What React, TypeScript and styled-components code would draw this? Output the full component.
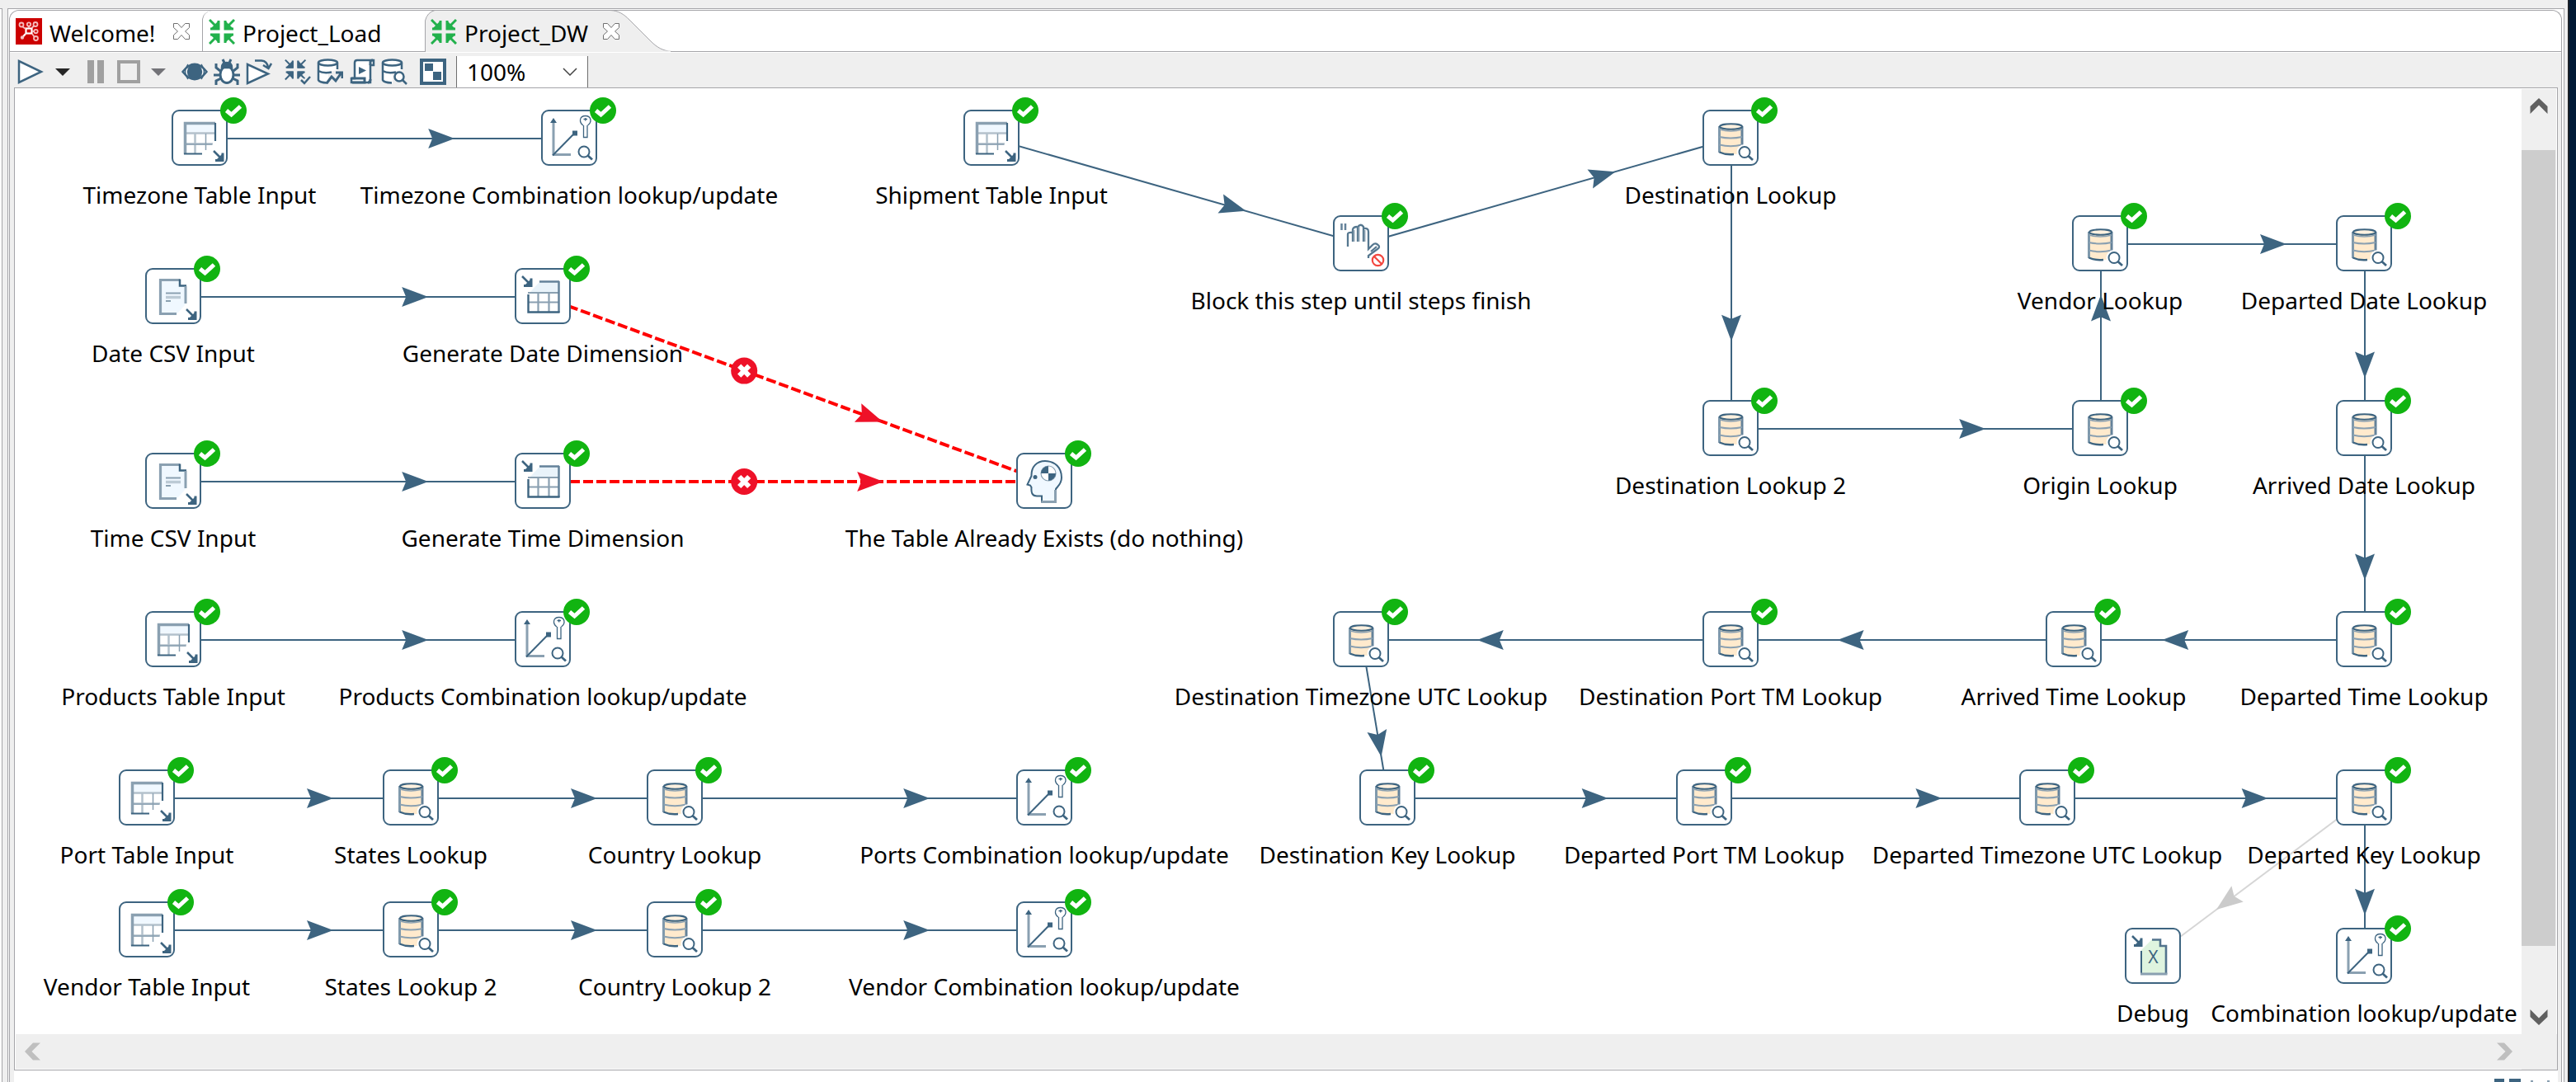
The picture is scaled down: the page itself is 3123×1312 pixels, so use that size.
import React from "react";
import styled, { createGlobalStyle } from "styled-components";

const INK = "#3d6480";
const SOFT = "#8aa0b1";
const LINE = "#a5a5a9";
const PANEL = "#efefef";

const GlobalStyle = createGlobalStyle`
  * { box-sizing: border-box; }
  body {
    margin: 0;
    background: ${PANEL};
    color: #000;
    font-family: "Noto Sans", "Open Sans", sans-serif;
    font-size: 28px;
    line-height: 36px;
  }
  button, select { font: inherit; color: inherit; }
`;

/* ---------- window frame ---------- */

const Desktop = styled.div`
  display: grid;
  grid-template-columns: 3px 1fr 10px;
  min-height: 100vh;
  background: ${PANEL};
`;

const Neighbour = styled.aside`
  margin-top: 10px;
  background: #fff;
  border-top: 1px solid ${LINE};
  border-right: 1px solid ${LINE};
`;

const Wallpaper = styled.div`
  border-left: 2px solid #1d2229;
  background: linear-gradient(#001833, #002c57 85%, #00335f);
`;

const Frame = styled.main`
  display: flex;
  margin: 10px 4px 0 6px;
  padding: 1px 2px 0 1px;
  border: 1px solid ${LINE};
  border-bottom: 0;
  background: #fff;
`;

const Editor = styled.div`
  flex: 1;
  min-width: 0;
  display: flex;
  flex-direction: column;
  border: 1px solid ${LINE};
  border-bottom: 0;
  border-radius: 12px 12px 0 0;
  background: ${PANEL};
`;

/* ---------- tabs ---------- */

const TabBar = styled.nav`
  display: flex;
  height: 50px;
  background: #fff;
  border-bottom: 1px solid ${LINE};
  border-radius: 12px 12px 0 0;
`;

const Tab = styled.div<{ $width: number; $first?: boolean; $active?: boolean }>`
  position: relative;
  display: flex;
  align-items: center;
  width: ${(p) => p.$width}px;
  height: ${(p) => (p.$active ? 50 : 49)}px;
  padding: 0 0 0 7px;
  border-left: ${(p) => (p.$first || p.$active ? 0 : 1)}px solid ${LINE};
  border-top-left-radius: 12px;
`;

const TabShape = styled.svg`
  position: absolute;
  inset: 0;
`;

const TabTitle = styled.button`
  position: relative;
  display: flex;
  align-items: center;
  gap: 9px;
  padding: 0;
  border: 0;
  background: none;
  white-space: nowrap;
`;

const TabText = styled.span`
  padding-top: 4px;
`;

const CloseButton = styled.button`
  position: relative;
  display: flex;
  margin-left: auto;
  margin-right: var(--close-gap, 15px);
  padding: 0;
  border: 0;
  background: none;
`;

/* ---------- toolbar ---------- */

const ToolBar = styled.div`
  display: flex;
  align-items: center;
  height: 43px;
  padding: 4px 0 0 9px;
  border-top: 1px solid #fff;
`;

const ToolGroup = styled.div<{ $gap?: number }>`
  display: flex;
  align-items: center;
  gap: ${(p) => p.$gap ?? 7}px;
  margin-right: 15px;
`;

const Tool = styled.button<{ $width?: number }>`
  display: flex;
  justify-content: center;
  width: ${(p) => p.$width ?? 32}px;
  padding: 0;
  border: 0;
  background: none;
`;

const ZoomBox = styled.label`
  display: flex;
  align-items: center;
  width: 160px;
  height: 38px;
  margin-left: -3px;
  padding-right: 12px;
  border: solid #6f6f6f;
  border-width: 0 1px;
  background: #fff;
`;

const ZoomSelect = styled.select`
  flex: 1;
  min-width: 0;
  height: 38px;
  padding: 0 0 0 12px;
  border: 0;
  background: none;
  appearance: none;
`;

/* ---------- canvas ---------- */

const Workspace = styled.div`
  flex: 1;
  display: flex;
  flex-direction: column;
  padding: 0 4px 0 5px;
`;

const Scroller = styled.section`
  flex: 1;
  display: grid;
  grid-template-columns: 1fr 43px;
  grid-template-rows: 1fr 43px;
  border: 1px solid ${LINE};
  background: ${PANEL};
`;

const Canvas = styled.div`
  position: relative;
  min-width: 0;
  overflow: hidden;
  background: #fff;
`;

const Hops = styled.svg`
  position: absolute;
  inset: 0;
  width: 100%;
  height: 100%;
`;

const StepBox = styled.figure`
  position: absolute;
  display: flex;
  flex-direction: column;
  align-items: center;
  width: 68px;
  margin: 0;
`;

const StepIcon = styled.div`
  width: 68px;
  height: 68px;
  border: 2px solid ${INK};
  border-radius: 9px;
  background: #fff;
  svg { display: block; margin: -2px; }
`;

const StepLabel = styled.figcaption`
  margin-top: 17px;
  white-space: nowrap;
`;

const Badge = styled.svg`
  position: absolute;
  top: -15px;
  right: -23px;
`;

const VerticalBar = styled.div`
  display: flex;
  flex-direction: column;
  border: solid #fff;
  border-width: 1px 1px 0 0;
`;

const HorizontalBar = styled.div`
  display: flex;
  justify-content: space-between;
  border: solid #fff;
  border-width: 0 0 1px 1px;
`;

const Arrow = styled.button`
  display: grid;
  place-items: center;
  width: 42px;
  height: 42px;
  padding: 0;
  border: 0;
  background: none;
`;

const Track = styled.div`
  flex: 1;
  display: grid;
  grid-template-rows: 32fr 965fr 65fr;
`;

const Thumb = styled.div`
  grid-row: 2;
  margin-right: 1px;
  background: #cdcdcd;
`;

const BottomStrip = styled.footer`
  display: flex;
  justify-content: flex-end;
  align-items: flex-end;
  height: 14px;
  padding-right: 8px;
  background: #fff;
`;

/* ---------- step drawings ---------- */

const SmallArrow = ({ x, y }: { x: number; y: number }) => (
  <g transform={`translate(${x} ${y})`}>
    <path d="M1 1 L9 9" stroke={INK} strokeWidth="2.5" />
    <path d="M12 3.5V12.500H3" fill="none" stroke={INK} strokeWidth="3" />
    <path d="M11 5v6H5z" fill={INK} />
  </g>
);

const Lens = ({ x, y }: { x: number; y: number }) => (
  <g transform={`translate(${x} ${y})`} fill="#fff" stroke={INK}>
    <circle r="6.500" strokeWidth="2" />
    <path d="M4.500 4.500L10 9.500" strokeWidth="2.800" />
  </g>
);

type Kind = "table" | "file" | "combo" | "generate" | "head" | "hand" | "db" | "excel";

const drawings: Record<Kind, React.ReactNode> = {
  table: (
    <>
      <path d="M18 18H52V27H18z" fill="#f0f8ff" />
      <path d="M28.500 28V53M17 28.500H53M17 41.500H50" stroke="#b3c1cc" strokeWidth="2.500" />
      <path d="M41.500 29V49M18 42H49" stroke={SOFT} strokeWidth="1.500" />
      <path d="M16.500 54V16.500H53" fill="none" stroke={SOFT} strokeWidth="3.500" />
      <path d="M53 16V38M15 53.500H37" stroke={INK} strokeWidth="2.200" />
      <SmallArrow x={50} y={49} />
    </>
  ),
  file: (
    <>
      <path d="M19 15H41V22H49V44L39 55H19z" fill="#f0f8ff" />
      <path d="M38 55.500H18.500V14.500H42" fill="none" stroke={SOFT} strokeWidth="3.200" />
      <path d="M42 13.500V21.500H50" fill="none" stroke={INK} strokeWidth="2.500" />
      <path d="M49 22V43" stroke={SOFT} strokeWidth="3" />
      <path d="M25 30.500H43M25 40H31" stroke={SOFT} strokeWidth="2" />
      <path d="M25 35.500H43" stroke="#bccad5" strokeWidth="3.500" />
      <SmallArrow x={49} y={49} />
    </>
  ),
  combo: (
    <>
      <path d="M15 55V14M14 54.500H36" stroke={SOFT} strokeWidth="3" />
      <path d="M11 16L15 10L19 16z" fill={INK} />
      <path d="M14 55.500L40 29" stroke={INK} strokeWidth="2" />
      <path d="M38 25.500H44V31.500H38z" fill={INK} />
      <g fill="none" stroke={INK} strokeWidth="1.300">
        <path d="M51.500 19V33.500H56V19" />
        <path d="M51 19C45.500 15 46.500 7.500 53.700 7.500S62 15 56.500 19" />
        <path d="M51.500 11.500H56M53.700 10V13.500" />
      </g>
      <Lens x={52} y={51} />
    </>
  ),
  generate: (
    <>
      <path d="M30 17H53V29H19z" fill="#e9f3fa" />
      <path d="M28.500 29V53M41.500 29V53" stroke={SOFT} strokeWidth="2.200" />
      <path d="M16 30H53M16 41.500H53" stroke={SOFT} strokeWidth="2" />
      <path d="M30 16.500H54M53.500 16V54" stroke="#64829a" strokeWidth="2.500" />
      <path d="M16.500 32V53.500H54.500" fill="none" stroke={INK} strokeWidth="2.400" />
      <SmallArrow x={8} y={9} />
    </>
  ),
  head: (
    <>
      <path
        d="M31 59.500V52.500H25C19 52.500 18 48 18.500 42L17 39.500L13.500 38.500L18.500 28C18 17 25 10 35 10C47 10 55 18 55 30C55 38 50 41 48 44V59.500z"
        fill="#f0f8ff"
        stroke={INK}
        strokeWidth="2"
      />
      <path d="M30.500 59.500H47.500V45" fill="none" stroke={SOFT} strokeWidth="3" />
      <circle cx="39" cy="25" r="9" fill="#fff" stroke={SOFT} strokeWidth="1.200" />
      <path d="M39 25V16A9 9 0 0 0 30 25zM39 25V34A9 9 0 0 0 48 25z" fill={INK} />
      <circle cx="23" cy="29.500" r="2.500" fill={INK} />
    </>
  ),
  hand: (
    <>
      <path d="M10.500 10V18M15 10V18" stroke="#64829a" strokeWidth="2.500" />
      <g fill="none" stroke="#55778f" strokeWidth="2.300">
        <path d="M18 38V23Q18 20.500 23 21" />
        <path d="M24 32V17Q25 14 29 14" />
        <path d="M30 32V14Q34 9.500 37 14V32" />
        <path d="M37 16Q43 15 43 20V41L48 36Q51 33 54 35.500Q58 38 54 41L43 49V52" />
        <path d="M46 44L53 38" />
      </g>
      <path d="M25.500 18V32M31.500 14V32M38.500 18V32" stroke={SOFT} strokeWidth="1.800" />
      <circle cx="54.500" cy="54.500" r="6.700" fill="#fff" stroke="#f2473f" strokeWidth="2.200" />
      <path d="M50 50L59 59" stroke="#f2473f" strokeWidth="2.200" />
    </>
  ),
  db: (
    <>
      <path d="M20.500 20V52Q34 56.500 48.500 52V20Q34 15.500 20.500 20z" fill="#ffeacd" />
      <path d="M20.500 20V52" stroke="#7f99ac" strokeWidth="3" />
      <path d="M48 20V44" stroke="#64829a" strokeWidth="3" />
      <path d="M20.500 33Q34 36 48 33M20.500 42.500Q34 46 48 42.500" fill="none" stroke={SOFT} strokeWidth="2" />
      <ellipse cx="34.500" cy="20.500" rx="13.500" ry="3.200" fill="#fff1df" stroke={INK} strokeWidth="2" />
      <path d="M21 24Q34 28 48 24" fill="none" stroke={SOFT} strokeWidth="1.500" />
      <path d="M20.500 51.500Q28 55 38 54" fill="none" stroke={INK} strokeWidth="2.400" />
      <circle cx="51" cy="51.500" r="9.500" fill="#fff" />
      <Lens x={51} y={51.500} />
    </>
  ),
  excel: (
    <>
      <path d="M20 27L33 14H43V22H50V56H20z" fill="#dff4df" />
      <path d="M20 28V56" stroke={INK} strokeWidth="2" />
      <path d="M33 14.500H43V22H50V56" fill="none" stroke="#52738d" strokeWidth="2.600" />
      <path d="M19 56H51.500" stroke={SOFT} strokeWidth="3.200" />
      <text x="34.500" y="43" textAnchor="middle" fontSize="21" fill={INK}>X</text>
      <SmallArrow x={8} y={9} />
    </>
  ),
};

/* ---------- transformation model: column in grid cells of 32px, y in px ---------- */

const CELL = 32;

interface Step {
  id: string;
  label: string;
  kind: Kind;
  col: number;
  y: number;
  idle?: boolean;
}

const steps: Step[] = [
  { id: "tzIn", label: "Timezone Table Input", kind: "table", col: 7, y: 60 },
  { id: "tzCombo", label: "Timezone Combination lookup/update", kind: "combo", col: 21, y: 60 },
  { id: "shipIn", label: "Shipment Table Input", kind: "table", col: 37, y: 60 },
  { id: "dest", label: "Destination Lookup", kind: "db", col: 65, y: 60 },
  { id: "block", label: "Block this step until steps finish", kind: "hand", col: 51, y: 188 },
  { id: "vendor", label: "Vendor Lookup", kind: "db", col: 79, y: 188 },
  { id: "depDate", label: "Departed Date Lookup", kind: "db", col: 89, y: 188 },
  { id: "dateIn", label: "Date CSV Input", kind: "file", col: 6, y: 252 },
  { id: "dateGen", label: "Generate Date Dimension", kind: "generate", col: 20, y: 252 },
  { id: "dest2", label: "Destination Lookup 2", kind: "db", col: 65, y: 412 },
  { id: "origin", label: "Origin Lookup", kind: "db", col: 79, y: 412 },
  { id: "arrDate", label: "Arrived Date Lookup", kind: "db", col: 89, y: 412 },
  { id: "timeIn", label: "Time CSV Input", kind: "file", col: 6, y: 476 },
  { id: "timeGen", label: "Generate Time Dimension", kind: "generate", col: 20, y: 476 },
  { id: "exists", label: "The Table Already Exists (do nothing)", kind: "head", col: 39, y: 476 },
  { id: "prodIn", label: "Products Table Input", kind: "table", col: 6, y: 668 },
  { id: "prodCombo", label: "Products Combination lookup/update", kind: "combo", col: 20, y: 668 },
  { id: "destTz", label: "Destination Timezone UTC Lookup", kind: "db", col: 51, y: 668 },
  { id: "destPort", label: "Destination Port TM Lookup", kind: "db", col: 65, y: 668 },
  { id: "arrTime", label: "Arrived Time Lookup", kind: "db", col: 78, y: 668 },
  { id: "depTime", label: "Departed Time Lookup", kind: "db", col: 89, y: 668 },
  { id: "portIn", label: "Port Table Input", kind: "table", col: 5, y: 860 },
  { id: "states", label: "States Lookup", kind: "db", col: 15, y: 860 },
  { id: "country", label: "Country Lookup", kind: "db", col: 25, y: 860 },
  { id: "portCombo", label: "Ports Combination lookup/update", kind: "combo", col: 39, y: 860 },
  { id: "destKey", label: "Destination Key Lookup", kind: "db", col: 52, y: 860 },
  { id: "depPort", label: "Departed Port TM Lookup", kind: "db", col: 64, y: 860 },
  { id: "depTz", label: "Departed Timezone UTC Lookup", kind: "db", col: 77, y: 860 },
  { id: "depKey", label: "Departed Key Lookup", kind: "db", col: 89, y: 860 },
  { id: "vendIn", label: "Vendor Table Input", kind: "table", col: 5, y: 1020 },
  { id: "states2", label: "States Lookup 2", kind: "db", col: 15, y: 1020 },
  { id: "country2", label: "Country Lookup 2", kind: "db", col: 25, y: 1020 },
  { id: "vendCombo", label: "Vendor Combination lookup/update", kind: "combo", col: 39, y: 1020 },
  { id: "debug", label: "Debug", kind: "excel", col: 81, y: 1052, idle: true },
  { id: "combo", label: "Combination lookup/update", kind: "combo", col: 89, y: 1052 },
];

type HopState = "error" | "disabled";

const hops: [string, string, HopState?][] = [
  ["tzIn", "tzCombo"],
  ["shipIn", "block"],
  ["block", "dest"],
  ["dest", "dest2"],
  ["dest2", "origin"],
  ["origin", "vendor"],
  ["vendor", "depDate"],
  ["depDate", "arrDate"],
  ["arrDate", "depTime"],
  ["depTime", "arrTime"],
  ["arrTime", "destPort"],
  ["destPort", "destTz"],
  ["destTz", "destKey"],
  ["destKey", "depPort"],
  ["depPort", "depTz"],
  ["depTz", "depKey"],
  ["depKey", "debug", "disabled"],
  ["depKey", "combo"],
  ["dateIn", "dateGen"],
  ["dateGen", "exists", "error"],
  ["timeIn", "timeGen"],
  ["timeGen", "exists", "error"],
  ["prodIn", "prodCombo"],
  ["portIn", "states"],
  ["states", "country"],
  ["country", "portCombo"],
  ["vendIn", "states2"],
  ["states2", "country2"],
  ["country2", "vendCombo"],
];

const byId = Object.fromEntries(steps.map((s) => [s.id, s]));

function Hop({ from, to, state }: { from: Step; to: Step; state?: HopState }) {
  const x1 = from.col * CELL;
  const x2 = to.col * CELL;
  const dx = x2 - x1;
  const dy = to.y - from.y;
  const error = state === "error";
  const line = error ? "#ff0000" : state ? "#d6d6d6" : INK;
  const head = error ? "#ee1128" : state ? "#cbcbcb" : INK;
  const angle = (Math.atan2(dy, dx) * 180) / Math.PI;
  return (
    <g>
      <line
        x1={x1}
        y1={from.y}
        x2={x2}
        y2={to.y}
        stroke={line}
        strokeWidth={error ? 4 : 2}
        strokeDasharray={error ? "12 4" : undefined}
      />
      <path
        d="M17 0L-15 -12L-10 0L-15 12z"
        fill={head}
        transform={`translate(${x1 + dx * 0.65} ${from.y + dy * 0.65}) rotate(${angle})`}
      />
      {error && (
        <g transform={`translate(${x1 + dx * 0.4} ${from.y + dy * 0.4})`}>
          <circle r="16" fill="#ee1128" />
          <path d="M-6 -6L6 6M6 -6L-6 6" stroke="#fff" strokeWidth="6" />
        </g>
      )}
    </g>
  );
}

/* ---------- toolbar and tab drawings ---------- */

const Icon = ({ children, size = 32 }: { children: React.ReactNode; size?: number }) => (
  <svg width={size} height={size} viewBox={`0 0 ${size} ${size}`} fill="none" stroke={INK} strokeWidth="2.500" aria-hidden>
    {children}
  </svg>
);

const inward = (
  <path d="M1 2L10 11M12 3V13H2M31 2L22 11M20 3V13H30M1 31L10 22M2 20H12V30M31 31L22 22M30 20H20V30" />
);
const inwardHeads = <path d="M13 3V14H3zM19 3V14H29zM13 30V19H3zM19 30V19H29z" stroke="none" />;

const TransIcon = () => (
  <svg width="32" height="32" viewBox="0 0 32 32" fill="#22b14c" stroke="#22b14c" strokeWidth="3" aria-hidden>
    {inward}
    {inwardHeads}
  </svg>
);

const WelcomeIcon = () => (
  <svg width="32" height="32" viewBox="0 0 32 32" fill="none" stroke="#f6bcbc" strokeWidth="1.800" aria-hidden>
    <rect width="32" height="32" fill="#cc0000" stroke="none" />
    <circle cx="7" cy="8" r="2.500" />
    <circle cx="16" cy="7.500" r="2.200" />
    <circle cx="24" cy="7.500" r="2.500" />
    <circle cx="24.500" cy="16" r="2.200" />
    <circle cx="24.500" cy="24.500" r="2.500" />
    <rect x="12.500" y="12.500" width="7" height="6" stroke="#fff" strokeWidth="2.200" />
    <path d="M8.500 10.500L12 13M16 10V12M22 9.500L19.500 12M20 16H22M20 19L22.500 22.500" />
    <path d="M12 19L8 23.500" stroke="#fff" strokeWidth="2.200" />
    <circle cx="8" cy="23.500" r="1.300" fill="#fff" />
  </svg>
);

const CloseIcon = () => (
  <svg width="20" height="20" viewBox="0 0 20 20" fill="#fff" stroke="#707070" aria-hidden>
    <path d="M.5 .5H5.500L10 5.500L14.500 .5H19.500V5.500L14.500 10L19.500 14.500V19.500H14.500L10 14.500L5.500 19.500H.5V14.500L5.500 10L.5 5.500z" />
  </svg>
);

const Caret = ({ color }: { color: string }) => (
  <svg width="18" height="9" viewBox="0 0 18 9" fill={color} aria-hidden>
    <path d="M0 0H18L9 9z" />
  </svg>
);

const Chevron = ({ turn, color }: { turn: number; color: string }) => (
  <svg width="22" height="22" viewBox="-11 -11 22 22" fill={color} aria-hidden>
    <path d="M-10.500 0L0 -10L10.500 0V9L0 -1.500L-10.500 9z" transform={`rotate(${turn})`} />
  </svg>
);

const cylinder = (
  <>
    <path d="M2 6V26Q2 30 12 30H14V16L25 14V6z" fill="#fff" stroke="none" />
    <ellipse cx="13.500" cy="5" rx="11.500" ry="3.500" fill="#fff" />
    <path d="M2 5V26Q3 29 13 29.500M25 5V13M2 15Q8 18.500 18 16.500" />
  </>
);

const runTools = [
  { name: "Preview", art: (<>
    <path d="M1.500 16Q16 -2.500 30.500 16Q16 34.500 1.500 16z" fill="#fff" />
    <circle cx="16" cy="16" r="8" fill={INK} />
    <path d="M8 7Q1 16 8 25M24 7Q31 16 24 25" strokeWidth="1.500" />
  </>) },
  { name: "Debug", art: (<>
    <ellipse cx="16" cy="19.500" rx="8" ry="10" fill="#fff" strokeWidth="3" />
    <path d="M10 11Q10 5 16 5T22 11z" fill={INK} />
    <path d="M11 1L13 5M21 1L19 5M8 15L3 11V6M24 15L29 11V6M8 20H0M24 20H32M9 24L3 27V32M23 24L29 27V32" strokeWidth="3" />
  </>) },
  { name: "Replay", art: (<>
    <path d="M2 7V30L27 18.500z" fill="#fff" />
    <path d="M11 2.500H19Q26 3 27 11M21 8L27.500 12L31 6" />
  </>) },
];

const checkTools = [
  { name: "Verify", art: (<>
    <g transform="scale(.82)" fill={INK}>{inward}{inwardHeads}</g>
    <path d="M20 26L24 30L31 22" stroke={PANEL} strokeWidth="7" />
    <path d="M20 26L24 30L31 22" />
  </>) },
  { name: "Impact analysis", art: (<>
    {cylinder}
    <path d="M12 30L18 22L23 27L30 17M23 17H31V24" fill="none" strokeWidth="3" />
  </>) },
  { name: "Get SQL", art: (<>
    <path d="M10 2H30V8H26V29H3V24H7V5Q7 2 10 2z" fill="#fff" />
    <path d="M26 8V4Q26 2 29 2M3 24H19V29H4M23 29Q26 29 26 25" strokeWidth="3" />
    <path d="M12 10V19L21 14.500z" fill={INK} stroke="none" />
  </>) },
  { name: "Explore database", art: (<>
    {cylinder}
    <circle cx="22" cy="22" r="5.500" fill="#fff" />
    <path d="M26 26L31 31" />
  </>) },
];

export default function App() {
  return (
    <>
      <GlobalStyle />
      <Desktop>
        <Neighbour />
        <Frame>
          <Editor>
            <TabBar>
              <Tab $width={233} $first>
                <TabTitle><WelcomeIcon /><TabText>Welcome!</TabText></TabTitle>
                <CloseButton aria-label="Close Welcome"><CloseIcon /></CloseButton>
              </Tab>
              <Tab $width={270}>
                <TabTitle><TransIcon /><TabText>Project_Load</TabText></TabTitle>
              </Tab>
              <Tab $width={299} $active style={{ "--close-gap": "63px" } as React.CSSProperties}>
                <TabShape width="299" height="50" viewBox="0 0 299 50" aria-hidden>
                  <path
                    d="M.5 50V12Q3 2 12 -.5H225C235 0 241 4 248 11L274 37C282 45 289 48.500 299 49.500V50z"
                    fill={PANEL}
                    stroke={LINE}
                  />
                  <path d="M1 49.500H298" stroke={PANEL} strokeWidth="2" />
                </TabShape>
                <TabTitle><TransIcon /><TabText>Project_DW</TabText></TabTitle>
                <CloseButton aria-label="Close Project_DW"><CloseIcon /></CloseButton>
              </Tab>
            </TabBar>

            <ToolBar>
              <ToolGroup $gap={0}>
                <Tool aria-label="Run"><Icon><path d="M2 3V29L29 16z" fill="#fff" /></Icon></Tool>
                <Tool $width={46} aria-label="Run options"><Caret color="#262626" /></Tool>
                <Tool $width={34} aria-label="Pause">
                  <svg width="20" height="28" viewBox="0 0 20 28" fill="#a0a0a0" aria-hidden><path d="M0 0H8V28H0zM12 0H20V28H12z" /></svg>
                </Tool>
                <Tool $width={46} aria-label="Stop">
                  <svg width="28" height="28" viewBox="0 0 28 28" fill={PANEL} stroke="#a0a0a0" strokeWidth="4" aria-hidden><path d="M2 2H26V26H2z" /></svg>
                </Tool>
                <Tool $width={26} aria-label="Stop options"><Caret color="#737378" /></Tool>
              </ToolGroup>
              <ToolGroup>
                {runTools.map((t) => <Tool key={t.name} aria-label={t.name}><Icon>{t.art}</Icon></Tool>)}
              </ToolGroup>
              <ToolGroup>
                {checkTools.map((t) => <Tool key={t.name} aria-label={t.name}><Icon>{t.art}</Icon></Tool>)}
              </ToolGroup>
              <ToolGroup>
                <Tool aria-label="Show results pane">
                  <Icon>
                    <path d="M2 2H30V30H2z" fill="#fff" strokeWidth="4" />
                    <path d="M6 6H16V15H6zM16 16H26V26H16z" fill={INK} stroke="none" />
                  </Icon>
                </Tool>
              </ToolGroup>
              <ZoomBox>
                <ZoomSelect aria-label="Zoom" defaultValue="100%">
                  <option>100%</option>
                </ZoomSelect>
                <svg width="18" height="10" viewBox="0 0 18 10" fill="none" stroke="#444" strokeWidth="1.500" aria-hidden>
                  <path d="M1 1L9 9L17 1" />
                </svg>
              </ZoomBox>
            </ToolBar>

            <Workspace>
              <Scroller>
                <Canvas>
                  <Hops aria-hidden>
                    <g transform="translate(1 1)">
                      {hops.map(([a, b, state]) => <Hop key={a + b} from={byId[a]} to={byId[b]} state={state} />)}
                    </g>
                  </Hops>
                  {steps.map((s) => (
                    <StepBox key={s.id} style={{ left: s.col * CELL - 34, top: s.y - 34 }}>
                      <StepIcon>
                        <svg width="68" height="68" viewBox="0 0 68 68" fill="none" aria-hidden>{drawings[s.kind]}</svg>
                      </StepIcon>
                      {!s.idle && (
                        <Badge width="32" height="32" viewBox="0 0 32 32" fill="none" aria-hidden>
                          <circle cx="16" cy="16" r="16" fill="#11b411" />
                          <path d="M7.500 16L13.500 21L24.500 11" stroke="#fff" strokeWidth="5" />
                        </Badge>
                      )}
                      <StepLabel>{s.label}</StepLabel>
                    </StepBox>
                  ))}
                </Canvas>
                <VerticalBar>
                  <Arrow aria-label="Scroll up"><Chevron turn={0} color="#606060" /></Arrow>
                  <Track><Thumb /></Track>
                  <Arrow aria-label="Scroll down"><Chevron turn={180} color="#606060" /></Arrow>
                </VerticalBar>
                <HorizontalBar>
                  <Arrow aria-label="Scroll left"><Chevron turn={-90} color="#bfbfbf" /></Arrow>
                  <Arrow aria-label="Scroll right"><Chevron turn={90} color="#bfbfbf" /></Arrow>
                </HorizontalBar>
              </Scroller>
              <BottomStrip>
                <svg width="70" height="4" viewBox="0 0 70 4" aria-hidden>
                  <path d="M1 0H13V4H1zM19 0H33V4H19z" fill={INK} />
                  <path d="M45 2H48V4H45zM65 2H68V4H65z" fill={SOFT} />
                </svg>
              </BottomStrip>
            </Workspace>
          </Editor>
        </Frame>
        <Wallpaper />
      </Desktop>
    </>
  );
}
